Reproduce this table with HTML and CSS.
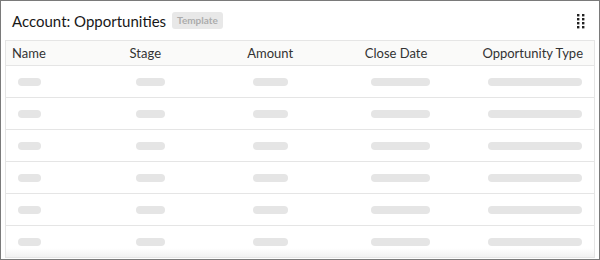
FILE: index.html
```html
<!DOCTYPE html>
<html>
<head>
<meta charset="utf-8">
<link rel="stylesheet" href="styles.css">
</head>
<body>
<div class="card">
  <div class="card-header">
    <h1 class="title">Account: Opportunities</h1>
    <span class="badge">Template</span>
    <span class="spacer"></span>
    <span class="drag">
      <svg width="8" height="15" viewBox="0 0 8 15">
        <g fill="#222">
          <rect x="0" y="0" width="2.4" height="2.4"/><rect x="5" y="0" width="2.4" height="2.4"/>
          <rect x="0" y="4" width="2.4" height="2.4"/><rect x="5" y="4" width="2.4" height="2.4"/>
          <rect x="0" y="8" width="2.4" height="2.4"/><rect x="5" y="8" width="2.4" height="2.4"/>
          <rect x="0" y="12" width="2.4" height="2.4"/><rect x="5" y="12" width="2.4" height="2.4"/>
        </g>
      </svg>
    </span>
  </div>
  <div class="table">
    <div class="row head">
      <div class="cell">Name</div>
      <div class="cell">Stage</div>
      <div class="cell">Amount</div>
      <div class="cell">Close Date</div>
      <div class="cell">Opportunity Type</div>
    </div>
    <div class="row"><div class="cell"><i class="bar b1"></i></div><div class="cell"><i class="bar b2"></i></div><div class="cell"><i class="bar b3"></i></div><div class="cell"><i class="bar b4"></i></div><div class="cell"><i class="bar b5"></i></div></div>
    <div class="row"><div class="cell"><i class="bar b1"></i></div><div class="cell"><i class="bar b2"></i></div><div class="cell"><i class="bar b3"></i></div><div class="cell"><i class="bar b4"></i></div><div class="cell"><i class="bar b5"></i></div></div>
    <div class="row"><div class="cell"><i class="bar b1"></i></div><div class="cell"><i class="bar b2"></i></div><div class="cell"><i class="bar b3"></i></div><div class="cell"><i class="bar b4"></i></div><div class="cell"><i class="bar b5"></i></div></div>
    <div class="row"><div class="cell"><i class="bar b1"></i></div><div class="cell"><i class="bar b2"></i></div><div class="cell"><i class="bar b3"></i></div><div class="cell"><i class="bar b4"></i></div><div class="cell"><i class="bar b5"></i></div></div>
    <div class="row"><div class="cell"><i class="bar b1"></i></div><div class="cell"><i class="bar b2"></i></div><div class="cell"><i class="bar b3"></i></div><div class="cell"><i class="bar b4"></i></div><div class="cell"><i class="bar b5"></i></div></div>
    <div class="row last"><div class="cell"><i class="bar b1"></i></div><div class="cell"><i class="bar b2"></i></div><div class="cell"><i class="bar b3"></i></div><div class="cell"><i class="bar b4"></i></div><div class="cell"><i class="bar b5"></i></div></div>
  </div>
</div>
</body>
</html>
```

FILE: styles.css
```css
* { box-sizing: border-box; }
html, body { margin: 0; padding: 0; background: #fff; }
body {
  width: 600px; height: 260px; overflow: hidden;
  font-family: Lato, "Noto Sans", sans-serif;
  color: #181818;
}
.card {
  width: 600px; height: 260px;
  border: 1px solid #7a7a7a;
  background: #fff;
  padding: 0 4px;
  overflow: hidden;
}
.card-header {
  height: 39px;
  display: flex;
  align-items: center;
  padding: 0 7px 0 7px;
}
.title {
  margin: 0;
  font-size: 15px;
  font-weight: 400;
  color: #181818;
}
.badge {
  margin-left: 6px;
  background: #e8e8e8;
  color: #acacac;
  font-size: 10px;
  font-weight: 700;
  border-radius: 3px;
  padding: 3px 5px;
  line-height: 11px;
}
.spacer { flex: 1; }
.drag { display: flex; margin-right: 3px; margin-top: 1px; }
.table {
  border: 1px solid #e5e5e5;
}
.row {
  display: grid;
  grid-template-columns: repeat(5, 1fr);
  height: 32px;
  border-top: 1px solid #e5e5e5;
  align-items: center;
}
.row.head {
  border-top: none;
  height: 24px;
  background: #fafaf9;
  font-size: 13px;
  color: #333;
}
.row.last {
  background: linear-gradient(to bottom, #fff 72%, #f2f2f2 100%);
}
.cell { padding-left: 6px; }
.row:not(.head) .cell { padding-left: 12px; display: flex; }
.bar {
  display: block;
  height: 8px;
  border-radius: 4px;
  background: #e5e5e5;
}
.b1 { width: 23px; }
.b2 { width: 29px; }
.b3 { width: 35px; }
.b4 { width: 59px; }
.b5 { width: 94px; }
```
